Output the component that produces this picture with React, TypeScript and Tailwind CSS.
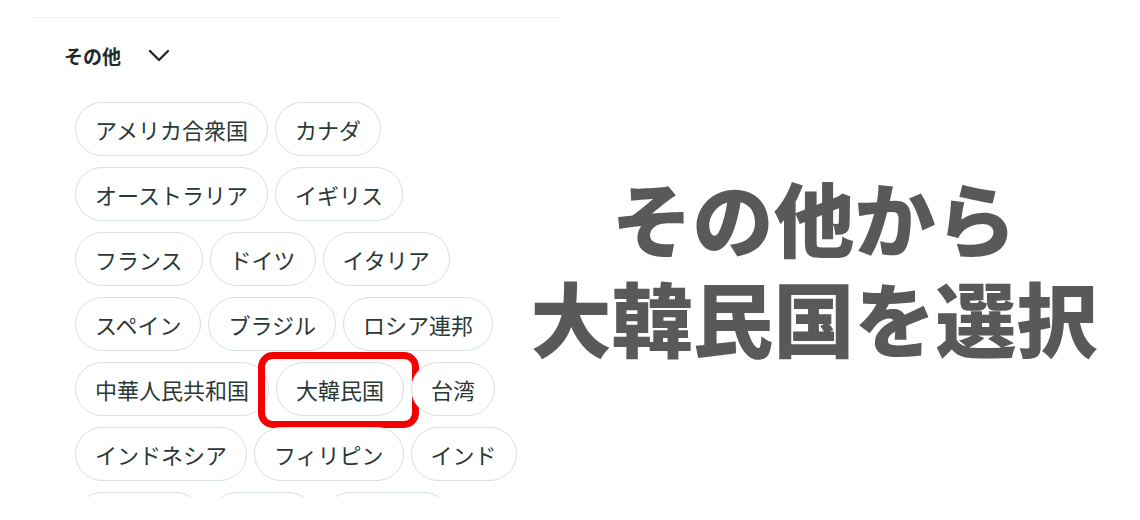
import React from "react";

const rows: string[][] = [
  ["アメリカ合衆国", "カナダ"],
  ["オーストラリア", "イギリス"],
  ["フランス", "ドイツ", "イタリア"],
  ["スペイン", "ブラジル", "ロシア連邦"],
  ["中華人民共和国", "大韓民国", "台湾"],
  ["インドネシア", "フィリピン", "インド"],
];

function Chip({ label, highlight }: { label: string; highlight?: boolean }) {
  return (
    <div className="relative">
      <div className="h-[54px] px-[19px] flex items-center rounded-full border border-[#d6e0e1] bg-white text-[22px] leading-none text-[#2a3838] whitespace-nowrap">
        {label}
      </div>
      {highlight && (
        <div className="absolute left-[-18px] top-[-10px] w-[161px] h-[76px] border-[7px] border-[#f40000] rounded-[15px] pointer-events-none" />
      )}
    </div>
  );
}

export default function App() {
  return (
    <div
      className="w-[1140px] h-[520px] bg-white overflow-hidden flex"
      style={{ fontFamily: '"Noto Sans CJK JP", "Noto Sans", sans-serif' }}
    >
      <div className="w-[520px] shrink-0 flex flex-col">
        <div className="h-[17px]" />
        <div className="ml-[33px] w-[527px] h-px bg-[#f1f1f1]" />
        <div className="mt-[17px] h-[40px] pl-[64px] flex items-center">
          <span className="text-[19px] font-bold text-[#1d2b2b] leading-none">その他</span>
          <svg className="ml-[27px]" width="22" height="13" viewBox="0 0 22 13" fill="none">
            <path d="M2 2 L11 11 L20 2" stroke="#1d2b2b" strokeWidth="2.4" strokeLinecap="round" strokeLinejoin="round" />
          </svg>
        </div>
        <div className="mt-[27px] pl-[75px] h-[395px] overflow-hidden flex flex-col gap-[11px]">
          {rows.map((r, i) => (
            <div key={i} className="flex gap-[7px]">
              {r.map((l) => (
                <Chip key={l} label={l} highlight={l === "大韓民国"} />
              ))}
            </div>
          ))}
          <div className="flex gap-[7px]">
            <div className="h-[54px] w-[128px] rounded-full border border-[#d6e0e1] bg-white" />
            <div className="h-[54px] w-[106px] rounded-full border border-[#d6e0e1] bg-white" />
            <div className="h-[54px] w-[128px] rounded-full border border-[#d6e0e1] bg-white" />
          </div>
        </div>
      </div>
      <div className="flex-1 pr-[32px] pt-[175px] flex flex-col items-center">
        <div className="flex flex-col items-center gap-[19px] text-[81px] leading-[81px] font-black text-[#595959] whitespace-nowrap">
          <div>その他から</div>
          <div>大韓民国を選択</div>
        </div>
      </div>
    </div>
  );
}
